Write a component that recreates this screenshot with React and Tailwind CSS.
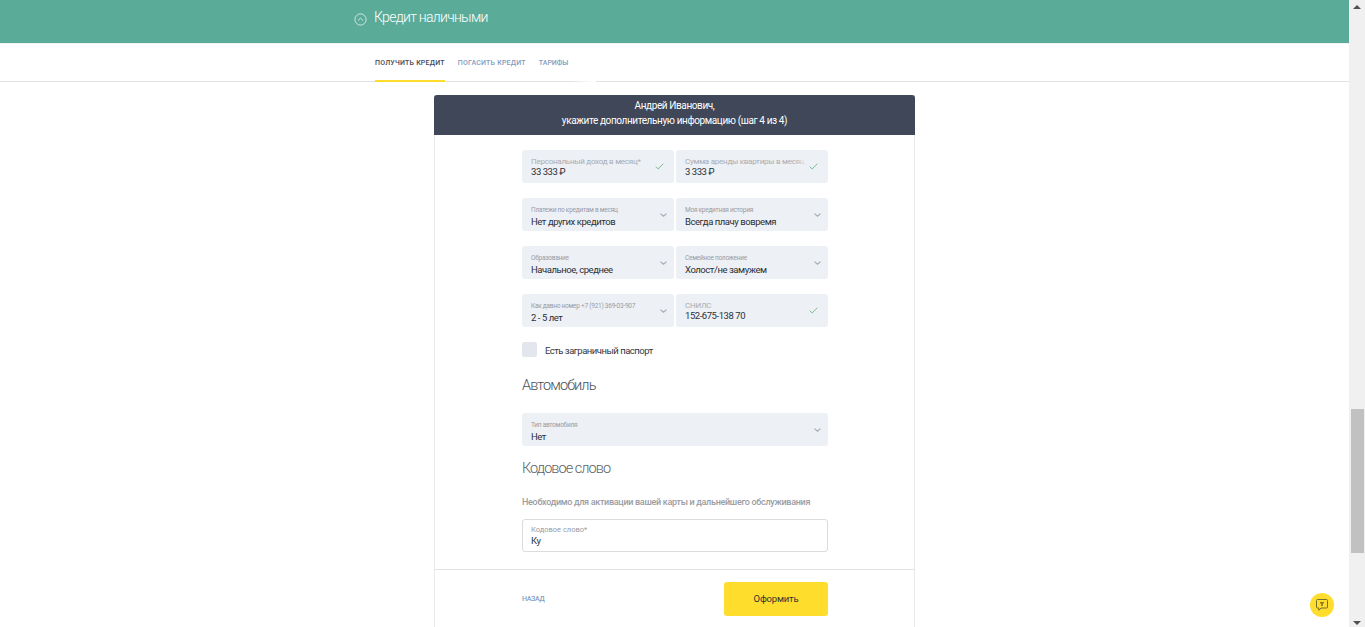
import React from "react";

function Check() {
  return (
    <svg width="9" height="7" viewBox="0 0 9 7" fill="none" className="absolute right-[10px] top-[13px]">
      <path d="M0.7 3.6 L3.2 6 L8.3 0.7" stroke="#7cc08f" strokeWidth="1" />
    </svg>
  );
}

function Chevron() {
  return (
    <svg width="7" height="4" viewBox="0 0 7 4" fill="none" className="absolute right-[7px] top-[15px]">
      <path d="M0.5 0.6 L3.5 3.2 L6.5 0.6" stroke="#a3a8b0" strokeWidth="1.1" />
    </svg>
  );
}

function Field({ label, value, small, icon, className = "" }) {
  return (
    <div className={`relative h-[33px] rounded-[3px] bg-[#edf0f5] pl-[9px] overflow-hidden ${className}`}>
      {small ? (
        <div className="mt-[8px] h-[9px] text-[6.5px] leading-[9px] tracking-[-0.25px] text-[#989ca5] whitespace-nowrap">{label}</div>
      ) : (
        <div className="mt-[6px] h-[10px] w-[122px] overflow-hidden text-[8px] leading-[11px] tracking-[-0.25px] text-[#a8acb3] whitespace-nowrap">{label}</div>
      )}
      <div className={`${small ? "mt-0" : "mt-[-1px]"} text-[9.5px] leading-[13px] tracking-[-0.45px] text-[#2b2f36] whitespace-nowrap`}>{value}</div>
      {!small && <div className="absolute left-[120px] top-0 h-[16px] w-[11px] bg-gradient-to-r from-transparent to-[#edf0f5]" />}
      {icon === "check" ? <Check /> : <Chevron />}
    </div>
  );
}

export default function App() {
  return (
    <div className="flex h-[627px] w-full overflow-hidden bg-white font-['Roboto',sans-serif]">
      <div className="relative flex-1 min-w-0">
        <div className="flex h-[43px] items-start bg-[#5aac99] pl-[354px] pt-[9px]">
          <svg width="13" height="13" viewBox="0 0 13 13" fill="none" className="mt-[4px]">
            <circle cx="6.5" cy="6.5" r="5.6" stroke="#cfe6df" strokeWidth="1" />
            <path d="M4 7.5 L6.5 5.2 L9 7.5" stroke="#cfe6df" strokeWidth="1" />
          </svg>
          <span className="ml-[7px] text-[14px] leading-[16px] tracking-[-0.7px] font-light text-white whitespace-nowrap">Кредит наличными</span>
        </div>

        <div className="relative h-[39px] border-t border-t-[#eef3f1] border-b border-b-[#e2e2e2] pl-[375px]">
          <div className="flex gap-[13px] text-[7px] font-medium tracking-[0.22px]">
            <div className="h-[38px] border-b-2 border-[#ffdd2d] pt-[14px] leading-[10px] text-[#3f4759] whitespace-nowrap">ПОЛУЧИТЬ КРЕДИТ</div>
            <div className="pt-[14px] leading-[10px] text-[#7f9cc0] whitespace-nowrap">ПОГАСИТЬ КРЕДИТ</div>
            <div className="pt-[14px] leading-[10px] tracking-[0px] text-[#7f9cc0] whitespace-nowrap">ТАРИФЫ</div>
          </div>
          <div className="absolute left-[570px] bottom-[-1px] h-[1px] w-[26px] bg-gradient-to-r from-transparent to-white" />
        </div>

        <div className="mx-auto mt-[13px] h-[600px] w-[481px] border-x border-[#e8e8e8]">
          <div className="-mx-px flex h-[40px] flex-col items-center rounded-t-[3px] bg-[#3f4759] pt-[3px] text-[10px] leading-[15px] tracking-[-0.39px] text-white">
            <div>Андрей Иванович,</div>
            <div>укажите дополнительную информацию (шаг 4 из 4)</div>
          </div>

          <div className="pl-[87px]">
            <div className="grid w-[306px] grid-cols-2 gap-x-[2px] gap-y-[15px] pt-[15px]">
              <Field label="Персональный доход в месяц*" value="33 333 ₽" icon="check" />
              <Field label="Сумма аренды квартиры в месяц" value="3 333 ₽" icon="check" />
              <Field small label="Платежи по кредитам в месяц" value="Нет других кредитов" />
              <Field small label="Моя кредитная история" value="Всегда плачу вовремя" />
              <Field small label="Образование" value="Начальное, среднее" />
              <Field small label="Семейное положение" value="Холост/не замужем" />
              <Field small label="Как давно номер +7 (921) 369-03-907" value="2 - 5 лет" />
              <Field label="СНИЛС" value="152-675-138 70" icon="check" />
            </div>

            <div className="mt-[15px] flex h-[15px] items-start">
              <div className="h-[15px] w-[15px] rounded-[2px] bg-[#e3e6ec]" />
              <span className="ml-[8px] mt-[2px] text-[9.5px] leading-[13px] tracking-[-0.5px] text-[#33373e] whitespace-nowrap">Есть заграничный паспорт</span>
            </div>

            <div className="mt-[19px] h-[20px] text-[14.5px] leading-[20px] tracking-[-0.9px] font-light text-[#4a4f58]">Автомобиль</div>

            <Field small className="mt-[17px] w-[306px]" label="Тип автомобиля" value="Нет" />

            <div className="mt-[13px] h-[20px] text-[14.5px] leading-[20px] tracking-[-0.95px] font-light text-[#5c5f66]">Кодовое слово</div>

            <div className="mt-[17px] h-[12px] text-[9px] leading-[12px] tracking-[-0.3px] font-medium text-[#9a9ca3] whitespace-nowrap">Необходимо для активации вашей карты и дальнейшего обслуживания</div>

            <div className="mt-[11px] h-[33px] w-[306px] rounded-[3px] border border-[#dcdcdc] bg-white pl-[8px]">
              <div className="mt-[4px] h-[10px] text-[7.5px] leading-[11px] text-[#9a9da4] whitespace-nowrap">Кодовое слово*</div>
              <div className="text-[9.5px] leading-[13px] tracking-[-0.3px] text-[#2b2f36]">Ку</div>
            </div>
          </div>

          <div className="mt-[17px] flex h-[47px] items-start justify-between border-t border-[#e2e2e2] pl-[87px] pr-[86px] pt-[12px]">
            <span className="mt-[12px] text-[7px] leading-[10px] tracking-[-0.3px] font-medium text-[#7f9cc0]">НАЗАД</span>
            <button className="h-[34px] w-[104px] rounded-[3px] bg-[#ffdd2d] text-[9.5px] tracking-[-0.2px] text-[#333]">Оформить</button>
          </div>
        </div>

        <div className="absolute left-[1310px] top-[593px] flex h-[24px] w-[24px] items-center justify-center rounded-full bg-[#ffdd2d]">
          <svg width="14" height="14" viewBox="0 0 14 14" fill="none">
            <path d="M2.5 1.5 H11.5 A1 1 0 0 1 12.5 2.5 V9 A1 1 0 0 1 11.5 10 H6 L3.8 12.3 V10 H2.5 A1 1 0 0 1 1.5 9 V2.5 A1 1 0 0 1 2.5 1.5 Z" stroke="#7a6d2a" strokeWidth="1" />
            <path d="M5 4.3 H9 V5.3 H7.6 V8 H6.4 V5.3 H5 Z" fill="#5f5520" />
          </svg>
        </div>
      </div>

      <div className="flex h-[627px] w-[16px] flex-col bg-[#f0f0f0]">
        <div className="flex h-[9px] items-end justify-center">
          <svg width="8" height="4" viewBox="0 0 8 4"><path d="M4 0 L8 4 H0 Z" fill="#505050" /></svg>
        </div>
        <div className="mt-[400px] ml-[2px] h-[144px] w-[13px] bg-[#c1c1c1]" />
        <div className="flex flex-1 items-end justify-center pb-[2px]">
          <svg width="8" height="4" viewBox="0 0 8 4"><path d="M0 0 H8 L4 4 Z" fill="#505050" /></svg>
        </div>
      </div>
    </div>
  );
}
